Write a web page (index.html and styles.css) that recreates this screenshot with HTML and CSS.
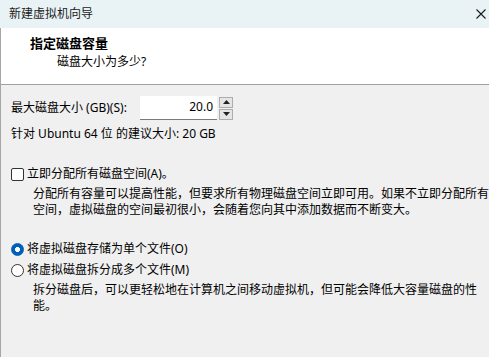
FILE: index.html
```html
<!DOCTYPE html>
<html>
<head>
  <meta charset="UTF-8">
  <title>新建虚拟机向导</title>
  <link rel="stylesheet" href="styles.css">
</head>
<body>
  <div class="titlebar">
    <span class="title">新建虚拟机向导</span>
    <svg class="close" width="10" height="10" viewBox="0 0 10 10">
      <path d="M0.5 0.5 L9.5 9.5 M9.5 0.5 L0.5 9.5" stroke="#1a1a1a" stroke-width="1.1" fill="none"/>
    </svg>
  </div>
  <div class="window">
    <div class="header">
      <div class="head-title">指定磁盘容量</div>
      <div class="head-sub">磁盘大小为多少?</div>
    </div>
    <div class="body">
      <div class="size-row">
        <span class="label">最大磁盘大小 (GB)(S):</span>
        <div class="spin">
          <div class="spin-value">20.0</div>
          <div class="spin-btns">
            <div class="spin-btn">
              <svg width="7" height="4" viewBox="0 0 7 4"><path d="M0 4 L3.5 0 L7 4 Z" fill="#222"/></svg>
            </div>
            <div class="spin-btn">
              <svg width="7" height="4" viewBox="0 0 7 4"><path d="M0 0 L3.5 4 L7 0 Z" fill="#222"/></svg>
            </div>
          </div>
        </div>
      </div>
      <div class="hint">针对 Ubuntu 64 位 的建议大小: 20 GB</div>

      <div class="option check-row">
        <span class="checkbox"></span>
        <span>立即分配所有磁盘空间(A)。</span>
      </div>
      <p class="desc">分配所有容量可以提高性能，但要求所有物理磁盘空间立即可用。如果不立即分配所有<br>空间，虚拟磁盘的空间最初很小，会随着您向其中添加数据而不断变大。</p>

      <div class="option radio-row first">
        <span class="radio checked"></span>
        <span>将虚拟磁盘存储为单个文件(O)</span>
      </div>
      <div class="option radio-row">
        <span class="radio"></span>
        <span>将虚拟磁盘拆分成多个文件(M)</span>
      </div>
      <p class="desc">拆分磁盘后，可以更轻松地在计算机之间移动虚拟机，但可能会降低大容量磁盘的性<br>能。</p>
    </div>
  </div>
</body>
</html>
```

FILE: styles.css
```css
* {
  box-sizing: border-box;
}
html, body {
  margin: 0;
  height: 100%;
}
body {
  font-family: "Noto Sans", "Noto Sans CJK SC", sans-serif;
  font-size: 12px;
  color: #000000;
  background-color: #f0f0f0;
  display: flex;
  flex-direction: column;
  overflow: hidden;
}
.titlebar {
  height: 28px;
  flex: none;
  background-color: #e9f3f6;
  display: flex;
  align-items: center;
  justify-content: space-between;
  padding: 0 3px 0 9px;
}
.title {
  font-size: 12px;
  line-height: 16px;
  color: #1a1a1a;
}
.window {
  flex: 1;
  border-left: 1px solid #a6a6a6;
  display: flex;
  flex-direction: column;
}
.header {
  height: 57px;
  flex: none;
  background-color: #ffffff;
  border-bottom: 1px solid #a0a0a0;
  padding: 7px 0 0 29px;
}
.head-title {
  font-size: 13px;
  font-weight: bold;
  line-height: 16px;
}
.head-sub {
  line-height: 16px;
  margin: 3px 0 0 27px;
}
.body {
  flex: 1;
  padding: 11px 0 0 10px;
}
.size-row {
  display: flex;
  align-items: center;
  height: 24px;
}
.label {
  width: 129px;
  line-height: 16px;
}
.spin {
  display: flex;
  height: 24px;
  width: 93px;
}
.spin-value {
  flex: 1;
  background-color: #ffffff;
  border-bottom: 1px solid #7a7a7a;
  text-align: right;
  padding-right: 4px;
  line-height: 22px;
}
.spin-btns {
  display: flex;
  flex-direction: column;
  justify-content: center;
  gap: 1px;
  margin-left: 2px;
}
.spin-btn {
  width: 14px;
  height: 11px;
  border: 1px solid #adadad;
  background-color: #e5e5e5;
  display: flex;
  align-items: center;
  justify-content: center;
}
.hint {
  margin-top: 6px;
  line-height: 16px;
}
.option {
  display: flex;
  align-items: center;
  line-height: 16px;
}
.check-row {
  margin-top: 24px;
  gap: 3px;
}
.checkbox {
  width: 13px;
  height: 13px;
  border: 1px solid #333333;
  border-radius: 2px;
  background-color: #ffffff;
}
.desc {
  margin: 4px 0 0 22px;
  line-height: 16px;
}
.radio-row {
  gap: 3px;
}
.radio-row.first {
  margin-top: 23px;
}
.radio-row + .radio-row {
  margin-top: 5px;
}
.radio {
  width: 13px;
  height: 13px;
  border: 1px solid #333333;
  border-radius: 50%;
  background-color: #ffffff;
}
.radio.checked {
  border-color: #005fb8;
  background: radial-gradient(circle, #ffffff 2.2px, #005fb8 2.8px);
}
```
